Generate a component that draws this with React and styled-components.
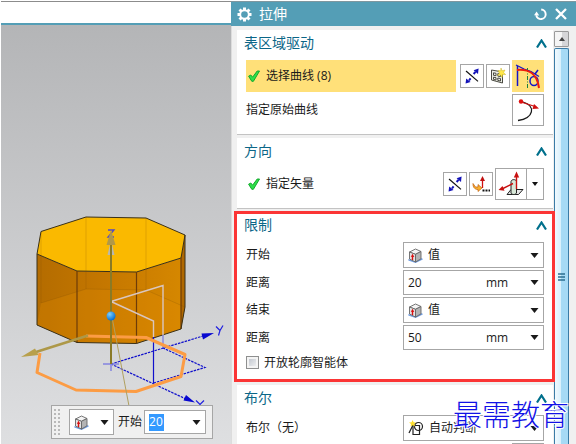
/**
 *
 * Extrude dialog
 *
 */

import React from 'react';
import styled, { createGlobalStyle, css } from 'styled-components';

const GlobalStyle = createGlobalStyle`
  * {
    box-sizing: border-box;
  }
  body {
    margin: 0;
    background: #fff;
    color: #1a1a1a;
    font-family: 'Open Sans', 'Noto Sans CJK SC', sans-serif;
    font-size: 12px;
    line-height: 18px;
    overflow: hidden;
  }
  button,
  input,
  select {
    margin: 0;
    padding: 0;
    border: none;
    background: none;
    color: inherit;
    font: inherit;
  }
  svg {
    display: block;
    flex: none;
  }
`;

const cssBox = css`
  border: 1px solid #a6a6a6;
  background: #fff;
`;

const Page = styled.div`
  display: grid;
  grid-template-columns: minmax(0, 1fr) 345px;
  height: 100vh;
  padding-top: 1px;
  padding-left: 1px;
  position: relative;
`;

const Viewport = styled.main`
  display: flex;
  flex-direction: column;
  min-height: 0;
  border-top: 1px solid #8c8c8c;
`;

const TopBar = styled.div`
  flex: none;
  height: 23px;
  border-bottom: 2px solid #549eb6;
`;

const Canvas = styled.div`
  flex: 1;
  min-height: 0;
  position: relative;
  overflow: hidden;
  background: linear-gradient(#b4b5b7, #dedfe1);
`;

const FloatBar = styled.div`
  position: absolute;
  left: 50px;
  top: 380px;
  display: flex;
  align-items: center;
  width: 162px;
  height: 34px;
  padding: 0 5px 0 2px;
  border: 1px solid #a6a6a6;
  background: #f0f0f0;
  label {
    flex: none;
    margin: 0 2px 0 4px;
  }
`;

const Grip = styled.div`
  flex: none;
  width: 6px;
  height: 26px;
  margin-right: 9px;
  background: conic-gradient(#b9b9b9 25%, transparent 0) -2px 0 / 4px 4px;
`;

const Panel = styled.aside`
  display: flex;
  flex-direction: column;
  min-height: 0;
  background: #f0f0f0;
`;

const PanelHeader = styled.header`
  flex: none;
  display: flex;
  align-items: center;
  height: 25px;
  padding: 0 9px 0 6px;
  border-top: 1px solid #7f979f;
  background: #549eb6;
  color: #fff;
  h1 {
    flex: 1;
    margin: 0 0 0 7px;
    font-size: 14px;
    font-weight: 400;
  }
  button + button {
    margin-left: 8px;
  }
`;

const PanelBody = styled.div`
  flex: 1;
  min-height: 0;
  display: flex;
  gap: 1px;
  padding: 4px 7px 0 5px;
  border-left: 1px solid #dcdcdc;
  overflow: hidden;
`;

const Cards = styled.div`
  flex: 1;
  display: flex;
  flex-direction: column;
  gap: 3px;
`;

const Card = styled.section`
  position: relative;
  flex: none;
  padding-bottom: 8px;
  border-bottom: 1px solid #c3c3c3;
  background: #fff;
  ${({ $marked }) =>
    $marked &&
    css`
      &::after {
        content: '';
        position: absolute;
        z-index: 1;
        inset: -1px -2px -1px -3px;
        border: 3px solid #fb3535;
        pointer-events: none;
      }
    `}
`;

const CardTitle = styled.div`
  display: flex;
  align-items: center;
  justify-content: space-between;
  height: 26px;
  padding: 0 6px 0 7px;
  h2 {
    margin: 0;
    color: #0b6687;
    font-size: 14px;
    font-weight: 400;
  }
`;

const Rows = styled.div`
  display: flex;
  flex-direction: column;
  gap: 2px;
  padding: 4px 9px 0;
`;

const Row = styled.div`
  display: flex;
  align-items: center;
  justify-content: flex-end;
  gap: 2px;
  > label,
  > p {
    flex: 1;
    margin: 0;
  }
`;

const Step = styled.div`
  flex: 1;
  display: flex;
  align-items: center;
  gap: 6px;
  height: 32px;
  margin-right: 2px;
  padding-left: 2px;
  background: ${({ $active }) => ($active ? '#ffe079' : 'none')};
`;

const IconButton = styled.button`
  ${cssBox}
  display: flex;
  align-items: center;
  justify-content: center;
  width: ${({ $big }) => ($big ? 32 : 24)}px;
  height: ${({ $big }) => ($big ? 32 : 24)}px;
  ${({ $active }) =>
    $active &&
    css`
      border-color: #ffe079;
      background: #ffe079;
    `}
`;

const SplitButton = styled.div`
  display: flex;
  button + button {
    width: 18px;
    margin-left: -1px;
  }
`;

const Field = styled.div`
  ${cssBox}
  flex: none;
  display: flex;
  align-items: center;
  width: ${({ $width }) => $width || 141}px;
  height: ${({ $height }) => $height || 26}px;
  padding: 0 4px;
  select {
    flex: 1;
    min-width: 0;
    margin-left: 5px;
    appearance: none;
    outline: none;
  }
`;

const NumberInput = styled.input`
  flex: 1;
  min-width: 0;
  width: 40px;
  outline: none;
`;

const SelectedInput = styled.input`
  width: 15px;
  height: 17px;
  background: #3399ff;
  color: #fff;
  outline: none;
`;

const ArrowButton = styled.button`
  display: flex;
  margin-left: auto;
`;

const Unit = styled.span`
  width: 44px;
`;

const CheckRow = styled.label`
  display: flex;
  align-items: center;
  gap: 5px;
  height: 21px;
  input {
    width: 13px;
    height: 13px;
    appearance: none;
    border: 1px solid #8e8f8f;
    background: linear-gradient(135deg, #b8bec8, #f8f8f8);
    box-shadow: inset 0 0 0 2px #f4f4f4;
  }
`;

const Scrollbar = styled.div`
  display: flex;
  flex-direction: column;
  gap: 1px;
  width: 15px;
  padding-top: 1px;
`;

const ScrollUp = styled.button`
  display: flex;
  align-items: center;
  justify-content: center;
  height: 16px;
  border: 1px solid #9a9a9a;
  border-radius: 1px;
  background: linear-gradient(90deg, #f5f5f5 50%, #d6d6d8 50%);
`;

const Thumb = styled.div`
  flex: 1;
  padding: 224px 0 0 3px;
  border: 1px solid #3a7ba6;
  border-bottom: none;
  border-radius: 2px 2px 0 0;
  background: linear-gradient(90deg, #f0f9fe, #d9f0fc 45%, #a6daf5 50%, #a6daf5);
`;

const Watermark = styled.div`
  position: absolute;
  right: 7px;
  top: 393px;
  z-index: 2;
  color: #1212e6;
  font-family: 'Noto Sans CJK SC', sans-serif;
  font-size: 29px;
  font-weight: 300;
  line-height: 40px;
  white-space: nowrap;
  paint-order: stroke fill;
  -webkit-text-stroke: 2px #fff;
`;

const Arrow = () => (
  <svg width="9" height="5" viewBox="0 0 9 5">
    <path d="M0.5 0h8L4.5 5z" fill="#1a1a1a" />
  </svg>
);

const SmallArrow = () => (
  <svg width="6" height="4" viewBox="0 0 6 4">
    <path d="M0 0h6L3 4z" fill="#111" />
  </svg>
);

const Caret = () => (
  <svg width="11" height="9" viewBox="0 0 11 9">
    <path d="M1 8.5 5.5 1.5 10 8.5" fill="none" stroke="#00708c" strokeWidth="2.2" />
  </svg>
);

const Check = () => (
  <svg width="12" height="12" viewBox="0 0 12 12">
    <path
      d="M.6 6.2 2.8 5 4.6 7.2 9.2 1 11.5 1 5.4 11.3 3.8 11.3z"
      fill="#2ee04a"
      stroke="#12a82c"
      strokeWidth="1"
    />
  </svg>
);

const Gear = () => (
  <svg width="15" height="15" viewBox="-7.5 -7.5 15 15">
    <g fill="#fff">
      {[0, 45, 90, 135].map(a => (
        <rect key={a} x="-1.5" y="-7" width="3" height="14" transform={`rotate(${a})`} />
      ))}
      <circle r="5.2" />
    </g>
    <circle r="3.3" fill="#549eb6" />
  </svg>
);

const Reset = () => (
  <svg width="13" height="13" viewBox="0 0 13 13">
    <path d="M7.2 1.5a4.8 4.8 0 1 1-5 5.8" fill="none" stroke="#fff" strokeWidth="1.9" />
    <path d="M0 7.2 2.6 3.6 5.2 7.6z" fill="#fff" />
  </svg>
);

const Close = () => (
  <svg width="12" height="12" viewBox="0 0 12 12">
    <path d="M1 1 11 11M11 1 1 11" stroke="#fff" strokeWidth="2.3" />
  </svg>
);

const Cube = () => (
  <svg width="15" height="15" viewBox="0 0 15 15">
    <path d="M.5 11 7.5 13.5 14 10 14.8 11.6 7.6 15 .3 12.4z" fill="#6e9be0" />
    <path d="M1.5 4 7.5 1 13 3.5 7.5 6.3z" fill="#f4f4f4" stroke="#666" strokeWidth=".9" />
    <path d="M1.5 4v7l6 3V6.3z" fill="#e4e4e4" stroke="#666" strokeWidth=".9" />
    <path d="M7.5 6.3V14l5.500-3.200V3.500z" fill="#b4b4b4" stroke="#666" strokeWidth=".9" />
    <path d="M4.5 12V8" stroke="#d81010" strokeWidth="1.4" />
    <path d="M2.800 8.700 4.600 5.800 6.300 9z" fill="#d81010" />
  </svg>
);

const Reverse = () => (
  <svg width="16" height="16" viewBox="0 0 16 16">
    <path d="M2 3 14 13.4" stroke="#111" strokeWidth="1.2" />
    <path d="M5 12.5 6.6 10.4M9.6 6 11.5 3.8" stroke="#1212b8" strokeWidth="2" />
    <path d="M14.6.6 14 6 9.6 2.2z" fill="#1212b8" />
    <path d="M1.6 15.6 2.2 10.4 6.6 14z" fill="#1212b8" />
  </svg>
);

const Sketch = () => (
  <svg width="16" height="16" viewBox="0 0 16 16">
    <path d="M1.5 2 12.5 4v11L1.5 12z" fill="#eef0e6" stroke="#4a4a42" />
    <path
      d="M3.5 4.8 6 5.3v2.4l-2.5-.4zM7.8 5.6l2.7.5v2.5l-2.7-.5zM3.5 9.2 6 9.7V12l-2.5-.6zM7.8 10l2.7.5V13l-2.7-.6z"
      fill="none"
      stroke="#4a4a42"
    />
    <path
      d="M11 0 12 2.8 15 2 13.6 4.5 15.7 6.5 12.7 6.6 12 9.4 10.4 6.9 7.4 7.5 9.4 5.2 8 2.5 10.700 2.700z"
      fill="#ffe74a"
      stroke="#c8b428"
      strokeWidth=".5"
    />
  </svg>
);

const Curve = () => (
  <svg width="26" height="26" viewBox="0 0 26 26">
    <path d="M2.5 3v20" stroke="#1414c8" strokeWidth="1.5" />
    <path d="M1 2 9 6 16 8.5 24 13.5" stroke="#1414c8" strokeWidth="1.3" fill="none" />
    <ellipse cx="19" cy="18" rx="4" ry="4.5" fill="none" stroke="#1414c8" strokeWidth="1.5" />
    <path d="M20 11 23 7" stroke="#1414c8" strokeWidth="1.5" />
    <path d="M12.5 5v21" stroke="#1c8040" strokeDasharray="4 1.5 1 1.5" />
    <path d="M2 7C14 6 22 10 24 25" fill="none" stroke="#ee1c0c" strokeWidth="2" />
  </svg>
);

const OriginCurve = () => (
  <svg width="26" height="26" viewBox="0 0 26 26">
    <path d="M8 5C21 9 19 21 3 23.5" fill="none" stroke="#1a1a1a" strokeWidth="1.3" />
    <path d="M6 5 20 9.5" stroke="#d01010" strokeWidth="1.3" />
    <circle cx="6" cy="4.5" r="2.2" fill="#e01010" />
    <path d="M24 11.5 17.5 12 19 7z" fill="#d01010" />
  </svg>
);

const VectorDialog = () => (
  <svg width="18" height="18" viewBox="0 0 18 18">
    <path d="M10.5 13V5" stroke="#d01010" strokeWidth="1.3" />
    <path d="M8 6 10.5 1 13 6z" fill="#c01010" />
    <path
      d="M1 8.5 3.5 12H6V9.5L10 13 6 16.5V14.5C2.5 14.5.8 12 1 8.5z"
      fill="#f8b030"
      stroke="#c06010"
      strokeWidth=".7"
    />
    <path d="M10.5 14.5h2v2h-2zM13.5 14.5h2v2h-2zM16.5 14.5H18v2h-1.5z" fill="#111" />
  </svg>
);

const FaceNormal = () => (
  <svg width="26" height="26" viewBox="0 0 26 26">
    <path d="M9 23.5 13 18.5H25L20.5 23.5z" fill="#e8e8e8" stroke="#222" />
    <path d="M13 22V10.500c.5-2.500 5-2.500 5.500 0V22c-1 2-4.500 2-5.500 0z" fill="#d8e8d8" stroke="#222" />
    <path d="M4 18 15 12.5M18.5 18V6" stroke="#c81010" strokeWidth="1.4" />
    <path d="M15.8 6.5 18.5.5 21.2 6.5z" fill="#c81010" />
    <path d="M.5 19 4.5 15 6.5 19.800z" fill="#c81010" />
  </svg>
);

const Infer = () => (
  <svg width="16" height="16" viewBox="0 0 16 16">
    <path d="M5 5.5h6.5v9H5z" fill="none" stroke="#222" strokeWidth="1.2" />
    <circle cx="10.5" cy="6.500" r="4" fill="none" stroke="#222" strokeWidth="1.2" />
    <path d="M1 13 6 3" stroke="#222" strokeWidth="1.2" />
    <path d="M4.5 0 5.6 2.3 8 2.5 6.3 4 7 6.500 4.700 5.200 2.500 6.500 3 4 1 2.600 3.600 2.300z" fill="#ffe030" />
  </svg>
);

const Model = () => (
  <svg width="230" height="419" viewBox="1 25 230 419">
    <defs>
      <linearGradient id="side" x1="0" x2="1">
        <stop offset="0" stopColor="#b46c00" />
        <stop offset=".5" stopColor="#c67800" />
        <stop offset="1" stopColor="#d68800" />
      </linearGradient>
      <radialGradient id="ball" cx=".35" cy=".3" r=".7">
        <stop offset="0" stopColor="#7cd0ff" />
        <stop offset="1" stopColor="#0870d0" />
      </radialGradient>
    </defs>

    {/* solid body */}
    <path
      d="M37 254 77 271 136.5 272 181 258 185 235V307L181 329 136.5 343.5 77 342.5 37 325z"
      fill="url(#side)"
    />
    <path
      d="M37 325 41 303 86 289 146 290 182 306 181 329 136.5 343.5 77 342.5z"
      fill="#e08c00"
      opacity=".3"
    />
    <path d="M181 258 185 235V307L181 329z" fill="#b06800" />
    <path
      d="M86 217 146 218 185 235 181 258 136.5 272 77 271 37 254 41 231.5z"
      fill="#fab900"
      stroke="#3a3018"
    />
    <path
      d="M86 217V289L41 303V232M86 289 146 290 185 307M146 218V290"
      fill="none"
      stroke="#7a4c00"
      opacity=".2"
    />
    <path d="M77 271V342.5M136.5 272V343.5M181 258V329" stroke="#6e3c08" strokeWidth="1.2" />
    <path
      d="M37 254V325L77 342.5 136.5 343.5 181 329 185 307V235"
      fill="none"
      stroke="#3a3018"
    />

    {/* datum planes and axes */}
    <path
      d="M111 301.5 163 285.5V335M111 301.5 153.5 321V337"
      fill="none"
      stroke="#d9c6c0"
      strokeWidth="1.4"
    />
    <path d="M163 335V348" stroke="#8484e0" strokeWidth="1.4" />
    <path d="M153.5 337V383" stroke="#1010cc" strokeWidth="1.2" />
    <path
      d="M111 364 203 336M111 364 186 399M153.5 383 205 367.5 163 348"
      fill="none"
      stroke="#1010cc"
      strokeWidth="1.2"
      strokeDasharray="2.5 1"
    />
    <path d="M214 333 201.500 333.500 203 339.500zM195 402.500 186 395 183.500 400.500z" fill="#0808d0" />
    <path
      d="M216 326.5 220 330.5 223 325.5M220 330.5 218.5 335.5M196 400.5 200 404.5 204 400.5M200 404.5V406"
      fill="none"
      stroke="#2020e0"
      strokeWidth="1.2"
    />
    <path d="M103 364H119M111 356V371" stroke="#8484e0" strokeWidth="1.5" />

    {/* section curves */}
    <path
      d="M86 336 146 337.5 185 354.5 181 376.5 136 391.5 76 390 37 372.5 40 353"
      fill="none"
      stroke="#fc9c44"
      strokeWidth="3"
      strokeLinejoin="round"
    />

    {/* drag handles */}
    <path d="M88 335.5 36 352" stroke="#ad9848" strokeWidth="2.5" />
    <path d="M21 357 35 348.5 38.5 355z" fill="#b8a04c" />
    <path d="M107.5 255 111 240 114.5 255z" fill="#b8b8b0" />
    <path d="M108 230h6l-6 7h6" fill="none" stroke="#5048c8" strokeWidth="1.3" />
    <path d="M111 364V243" stroke="#8a7a26" strokeWidth="2" />
    <path d="M106.5 245 111 230 115.5 245z" fill="#b09848" />
    <path d="M112 317 129 406" stroke="#b0a060" />
    <circle cx="111" cy="316" r="4.5" fill="url(#ball)" />
  </svg>
);

function Section({ title, marked, children }) {
  return (
    <Card $marked={marked}>
      <CardTitle>
        <h2>{title}</h2>
        <button type="button" aria-label={title}>
          <Caret />
        </button>
      </CardTitle>
      <Rows>{children}</Rows>
    </Card>
  );
}

function SelectRow({ id, label, value, icon }) {
  return (
    <Row>
      <label htmlFor={id}>{label}</label>
      <Field>
        {icon}
        <select id={id}>
          <option>{value}</option>
        </select>
        <Arrow />
      </Field>
    </Row>
  );
}

function DistanceRow({ id, value }) {
  return (
    <Row>
      <label htmlFor={id}>距离</label>
      <Field $height={25}>
        <NumberInput id={id} defaultValue={value} />
        <Unit>mm</Unit>
        <ArrowButton type="button" aria-label="mm">
          <Arrow />
        </ArrowButton>
      </Field>
    </Row>
  );
}

function App() {
  return (
    <Page>
      <GlobalStyle />
      <Viewport>
        <TopBar />
        <Canvas>
          <Model />
          <FloatBar>
            <Grip />
            <Field as="button" type="button" $width={45} aria-label="值">
              <Cube />
              <ArrowButton as="span">
                <Arrow />
              </ArrowButton>
            </Field>
            <label htmlFor="float-start">开始</label>
            <Field $width={62} $height={24}>
              <SelectedInput id="float-start" defaultValue="20" />
              <ArrowButton type="button" aria-label="开始">
                <Arrow />
              </ArrowButton>
            </Field>
          </FloatBar>
        </Canvas>
      </Viewport>

      <Panel>
        <PanelHeader>
          <Gear />
          <h1>拉伸</h1>
          <button type="button" aria-label="重置">
            <Reset />
          </button>
          <button type="button" aria-label="关闭">
            <Close />
          </button>
        </PanelHeader>
        <PanelBody>
          <Cards>
            <Section title="表区域驱动">
              <Row>
                <Step $active>
                  <Check />
                  <span>选择曲线 (8)</span>
                </Step>
                <IconButton type="button" aria-label="反向">
                  <Reverse />
                </IconButton>
                <IconButton type="button" aria-label="绘制截面">
                  <Sketch />
                </IconButton>
                <IconButton type="button" $big $active aria-label="曲线">
                  <Curve />
                </IconButton>
              </Row>
              <Row>
                <p>指定原始曲线</p>
                <IconButton type="button" $big aria-label="指定原始曲线">
                  <OriginCurve />
                </IconButton>
              </Row>
            </Section>

            <Section title="方向">
              <Row>
                <Step>
                  <Check />
                  <span>指定矢量</span>
                </Step>
                <IconButton type="button" aria-label="反向">
                  <Reverse />
                </IconButton>
                <IconButton type="button" aria-label="矢量对话框">
                  <VectorDialog />
                </IconButton>
                <SplitButton>
                  <IconButton type="button" $big aria-label="面法向">
                    <FaceNormal />
                  </IconButton>
                  <IconButton type="button" $big aria-label="更多">
                    <SmallArrow />
                  </IconButton>
                </SplitButton>
              </Row>
            </Section>

            <Section title="限制" marked>
              <SelectRow id="start" label="开始" value="值" icon={<Cube />} />
              <DistanceRow id="start-distance" value="20" />
              <SelectRow id="end" label="结束" value="值" icon={<Cube />} />
              <DistanceRow id="end-distance" value="50" />
              <CheckRow>
                <input type="checkbox" />
                开放轮廓智能体
              </CheckRow>
            </Section>

            <Section title="布尔">
              <SelectRow id="boolean" label="布尔（无）" value="自动判断" icon={<Infer />} />
              <Row>
                <IconButton type="button" $big aria-label="选择体" />
              </Row>
            </Section>
          </Cards>
          <Scrollbar>
            <ScrollUp type="button" aria-label="向上">
              <svg width="6" height="4" viewBox="0 0 6 4">
                <path d="M0 4h6L3 0z" fill="#444" />
              </svg>
            </ScrollUp>
            <Thumb>
              <svg width="7" height="9" viewBox="0 0 7 9">
                <path d="M0 1h7M0 4h7M0 7h7" stroke="#2c6f90" strokeWidth="1.5" />
              </svg>
            </Thumb>
          </Scrollbar>
        </PanelBody>
      </Panel>
      <Watermark>最需教育</Watermark>
    </Page>
  );
}

export default App;
